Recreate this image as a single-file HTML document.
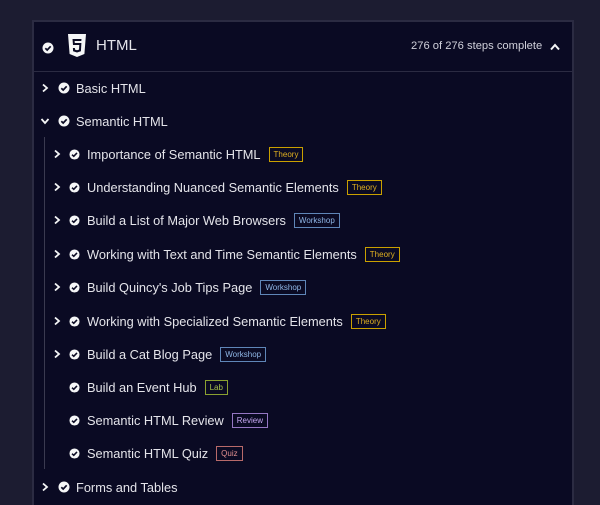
<!DOCTYPE html>
<html><head><style>
html,body{margin:0;padding:0;overflow:hidden;}
body{width:600px;height:505px;background:#1c1c31;font-family:"Liberation Sans",sans-serif;color:#e4e4ea;position:relative;overflow:hidden;}
.panel{position:absolute;left:32px;top:20px;width:538px;height:485px;background:#0a0a23;border:2px solid #2b2b42;border-bottom:none;}
.hdr{position:absolute;left:0;top:0;width:538px;height:49px;border-bottom:1px solid #2b2b42;}
.abs{position:absolute;}
.row{position:absolute;height:20px;display:flex;align-items:center;white-space:nowrap;}
.t1{font-size:12.8px;}
.badge{font-size:8px;border:1px solid;padding:2px 4px;margin-left:8px;line-height:9px;}
.th{color:#e0b020;border-color:#c9a000;}
.ws{color:#8fb6e6;border-color:#5f86b8;}
.lab{color:#a6c04a;border-color:#8aa030;}
.rv{color:#c4a6f0;border-color:#9577c4;}
.qz{color:#e29090;border-color:#b86a6a;}
.vline{position:absolute;left:44px;top:137px;width:1px;height:332px;background:#3a3a50;}
</style></head><body>
<svg width="0" height="0" style="position:absolute"><defs>
<symbol id="ck" viewBox="0 0 12 12"><circle cx="6" cy="6" r="5.5" fill="#f5f6f7"/><path d="M3.3 6.2 L5.2 8 L8.7 4.3" stroke="#0a0a23" stroke-width="1.7" fill="none"/></symbol>
<symbol id="cr" viewBox="0 0 10 10"><path d="M3 1.5 L7 5 L3 8.5" stroke="#f5f6f7" stroke-width="1.8" fill="none"/></symbol>
<symbol id="cd" viewBox="0 0 10 10"><path d="M1.5 3 L5 7 L8.5 3" stroke="#f5f6f7" stroke-width="1.8" fill="none"/></symbol>
</defs></svg>
<div class="panel">
<div class="hdr">
<svg class="abs" style="left:8px;top:20px" width="12" height="12"><use href="#ck"/></svg>
<svg class="abs" style="left:33px;top:12px" width="20" height="24" viewBox="0 0 20 24"><path d="M1 0 H19 L17.4 20 L10 23 L2.6 20 Z" fill="#f5f6f7"/><path d="M14.5 5 H5.5 L6 11 H12.3 L12 15.6 L10 16.3 L8 15.6 L7.9 14 H5.9 L6.1 17.2 L10 18.5 L13.9 17.2 L14.4 9 H7.8 L7.6 7 H14.3 Z" fill="#0a0a23"/></svg>
<div class="abs" style="left:62px;top:15px;font-size:15px;">HTML</div>
<div class="abs" style="left:377px;top:18px;font-size:11.2px;color:#d0d0da;">276 of 276 steps complete</div>
<svg class="abs" style="left:515px;top:20px" width="12" height="10" viewBox="0 0 12 10"><path d="M2 7.5 L6 3 L10 7.5" stroke="#f5f6f7" stroke-width="2" fill="none"/></svg>
</div>
</div>
<div class="vline"></div>

<div class="row t1" style="left:40px;top:78px"><svg width="10" height="10"><use href="#cr"/></svg><svg style="margin-left:8px" width="12" height="12"><use href="#ck"/></svg><span style="margin-left:6px">Basic HTML</span></div>
<div class="row t1" style="left:40px;top:111px"><svg width="10" height="10"><use href="#cd"/></svg><svg style="margin-left:8px" width="12" height="12"><use href="#ck"/></svg><span style="margin-left:6px">Semantic HTML</span></div>

<div class="row t1" style="left:52px;top:144px"><svg width="10" height="10"><use href="#cr"/></svg><svg style="margin-left:7px" width="11" height="11"><use href="#ck"/></svg><span style="margin-left:7px">Importance of Semantic HTML</span><span class="badge th">Theory</span></div>
<div class="row t1" style="left:52px;top:177px"><svg width="10" height="10"><use href="#cr"/></svg><svg style="margin-left:7px" width="11" height="11"><use href="#ck"/></svg><span style="margin-left:7px">Understanding Nuanced Semantic Elements</span><span class="badge th">Theory</span></div>
<div class="row t1" style="left:52px;top:210px"><svg width="10" height="10"><use href="#cr"/></svg><svg style="margin-left:7px" width="11" height="11"><use href="#ck"/></svg><span style="margin-left:7px">Build a List of Major Web Browsers</span><span class="badge ws">Workshop</span></div>
<div class="row t1" style="left:52px;top:244px"><svg width="10" height="10"><use href="#cr"/></svg><svg style="margin-left:7px" width="11" height="11"><use href="#ck"/></svg><span style="margin-left:7px">Working with Text and Time Semantic Elements</span><span class="badge th">Theory</span></div>
<div class="row t1" style="left:52px;top:277px"><svg width="10" height="10"><use href="#cr"/></svg><svg style="margin-left:7px" width="11" height="11"><use href="#ck"/></svg><span style="margin-left:7px">Build Quincy's Job Tips Page</span><span class="badge ws">Workshop</span></div>
<div class="row t1" style="left:52px;top:311px"><svg width="10" height="10"><use href="#cr"/></svg><svg style="margin-left:7px" width="11" height="11"><use href="#ck"/></svg><span style="margin-left:7px">Working with Specialized Semantic Elements</span><span class="badge th">Theory</span></div>
<div class="row t1" style="left:52px;top:344px"><svg width="10" height="10"><use href="#cr"/></svg><svg style="margin-left:7px" width="11" height="11"><use href="#ck"/></svg><span style="margin-left:7px">Build a Cat Blog Page</span><span class="badge ws">Workshop</span></div>
<div class="row t1" style="left:69px;top:377px"><svg width="11" height="11"><use href="#ck"/></svg><span style="margin-left:7px">Build an Event Hub</span><span class="badge lab">Lab</span></div>
<div class="row t1" style="left:69px;top:410px"><svg width="11" height="11"><use href="#ck"/></svg><span style="margin-left:7px">Semantic HTML Review</span><span class="badge rv">Review</span></div>
<div class="row t1" style="left:69px;top:443px"><svg width="11" height="11"><use href="#ck"/></svg><span style="margin-left:7px">Semantic HTML Quiz</span><span class="badge qz">Quiz</span></div>

<div class="row t1" style="left:40px;top:477px"><svg width="10" height="10"><use href="#cr"/></svg><svg style="margin-left:8px" width="12" height="12"><use href="#ck"/></svg><span style="margin-left:6px">Forms and Tables</span></div>
</body></html>
